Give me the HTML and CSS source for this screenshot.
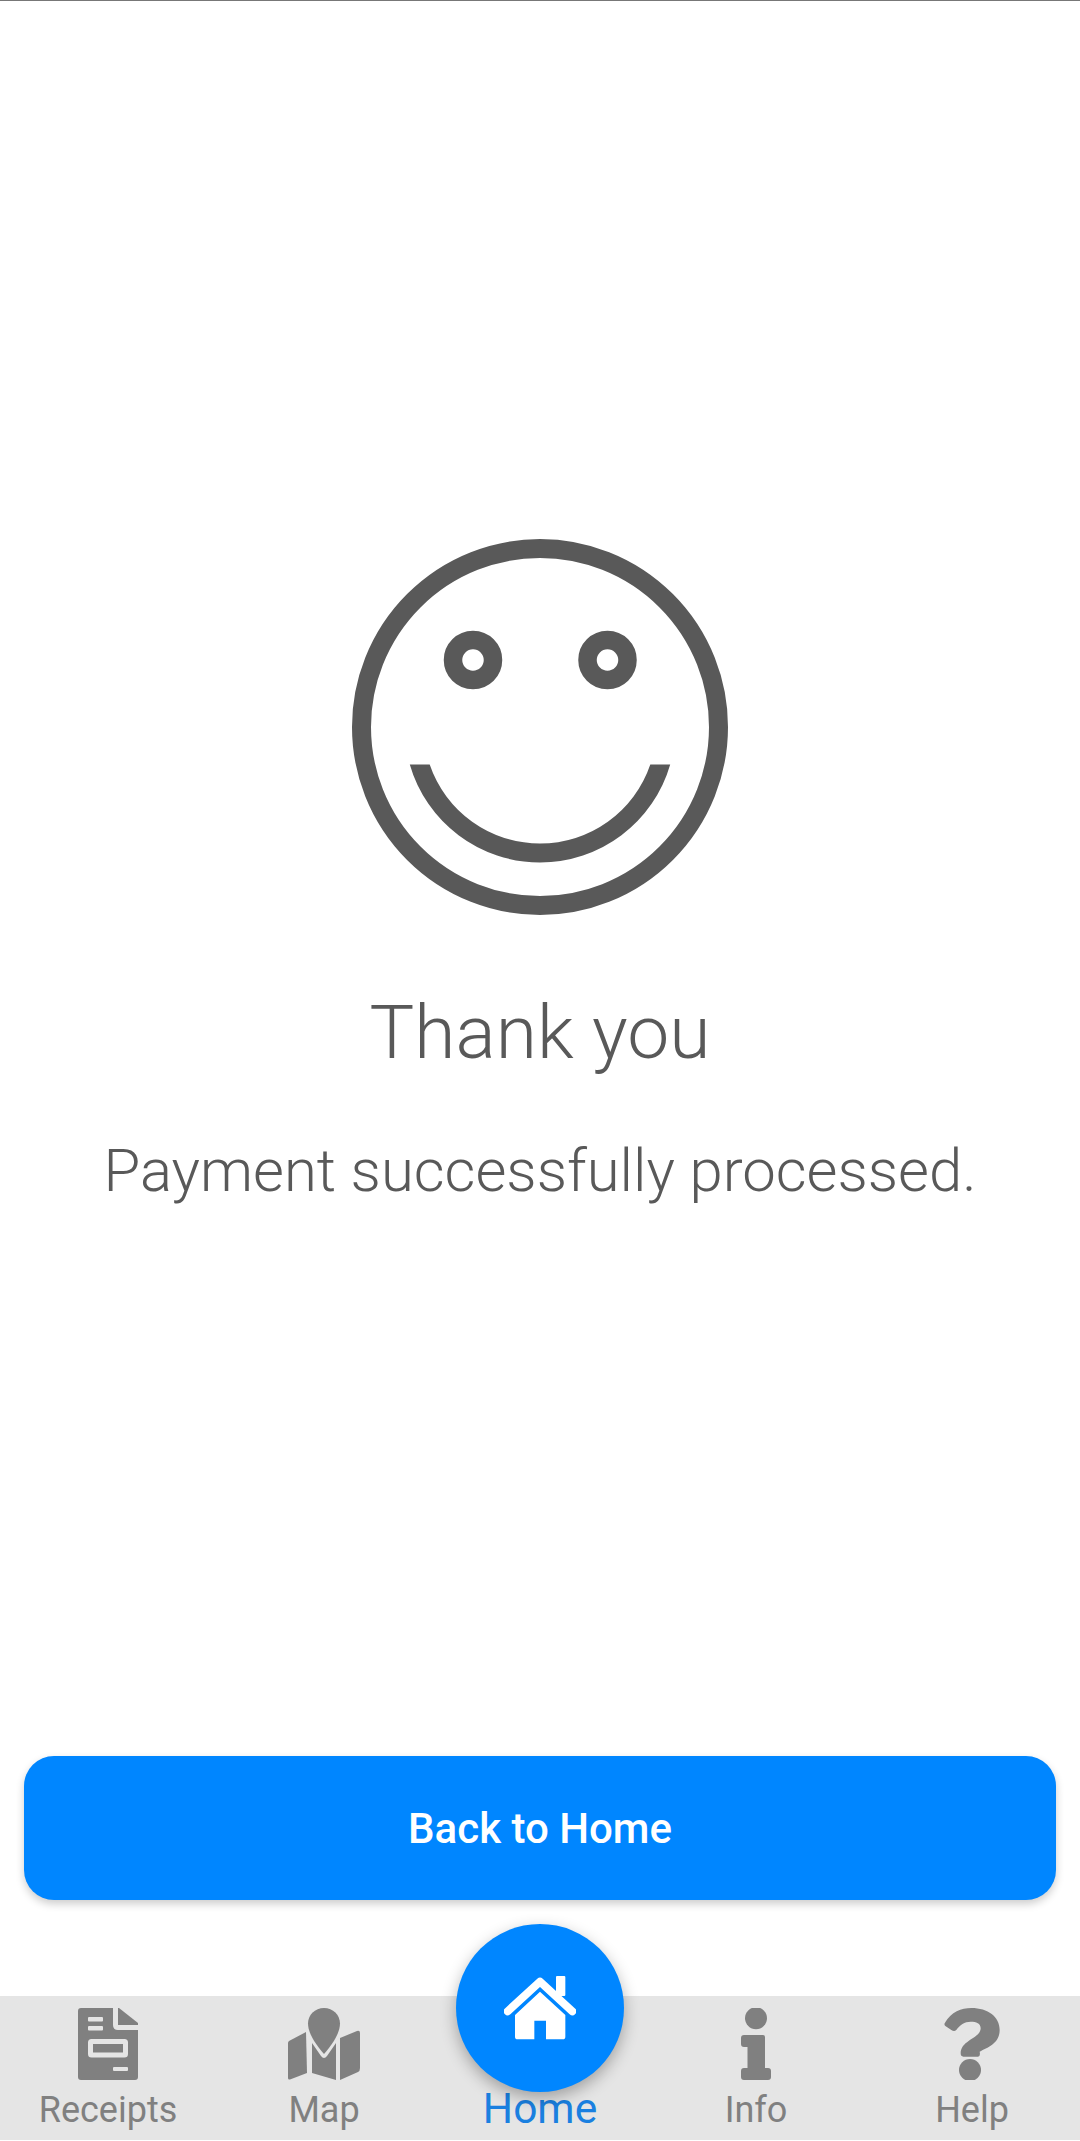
FILE: index.html
```html
<!DOCTYPE html>
<html lang="en">
<head>
    <meta charset="UTF-8">
    <meta name="viewport" content="width=device-width, initial-scale=1.0">
    <title>Payment Complete</title>
    <link rel="stylesheet" href="styles.css">
</head>
<body>
    <main class="content">
        <svg class="smiley" viewBox="350 537 380 380" aria-hidden="true">
            <circle cx="540" cy="727" r="178.5" fill="none" stroke="#595959" stroke-width="19"/>
            <circle cx="473" cy="660" r="20" fill="none" stroke="#595959" stroke-width="18.5"/>
            <circle cx="607.5" cy="660" r="20" fill="none" stroke="#595959" stroke-width="18.5"/>
            <path fill="#595959" d="M409.8 764.5A135.5 135.5 0 0 0 670.2 764.5H650.3A116.5 116.5 0 0 1 429.7 764.5Z"/>
        </svg>
        <h1 class="title">Thank you</h1>
        <p class="message">Payment successfully processed.</p>
    </main>

    <button class="home-button" type="button">Back to Home</button>

    <nav class="tabbar">
        <a class="tab">
            <svg class="tab-icon" width="60" height="72" viewBox="0 0 60 72" aria-hidden="true">
                <path fill="#808080" d="M3 0H35V17Q35 22 40 22H60V69Q60 72 57 72H3Q0 72 0 69V3Q0 0 3 0Z"/>
                <path fill="#808080" d="M40 0 L41 0 L60 15 V17 H40Z"/>
                <g fill="#e5e5e5">
                    <rect x="10" y="9" width="15" height="4.5" rx="1"/>
                    <rect x="10" y="18" width="15" height="4.5" rx="1"/>
                    <rect x="35" y="59" width="15" height="4" rx="1"/>
                </g>
                <rect x="12.5" y="33.5" width="35" height="13.5" fill="none" stroke="#e5e5e5" stroke-width="5" rx="1"/>
            </svg>
            <span class="tab-label">Receipts</span>
        </a>
        <a class="tab">
            <svg class="tab-icon" width="72" height="72" viewBox="0 0 72 72" aria-hidden="true">
                <path fill="#808080" d="M36 0C45 0 52 7 52 15.5C52 26 43 38 36 46C29 38 20 26 20 15.5C20 7 27 0 36 0Z"/>
                <path fill="#808080" d="M1 33L18 24L19 65L2 71.5Q0 72 0 70V35Q0 34 1 33Z"/>
                <path fill="#808080" d="M24 35L33 48Q36 52 39 48L48 35V72L24 65Z"/>
                <path fill="#808080" d="M52 30L69 23Q72 22 72 25V60Q72 63 70 64L52 72Z"/>
            </svg>
            <span class="tab-label">Map</span>
        </a>
        <a class="tab tab-home">
            <span class="home-fab">
                <svg width="72" height="64" viewBox="312 228 216 192" aria-hidden="true">
                    <rect x="468" y="228" width="28" height="60" rx="3" fill="#fff"/>
                    <path d="M323 334L420 245L517 334" fill="none" stroke="#fff" stroke-width="24" stroke-linecap="round" stroke-linejoin="round"/>
                    <path fill="#fff" d="M345 345L420 275L496 345V410Q496 418 488 418H438V362H403V418H353Q345 418 345 410Z"/>
                </svg>
            </span>
            <span class="tab-label">Home</span>
        </a>
        <a class="tab">
            <svg class="tab-icon" width="30" height="72" viewBox="0 0 30 72" aria-hidden="true">
                <circle cx="15" cy="10.2" r="11" fill="#808080"/>
                <path fill="#808080" d="M3 27H22Q24 27 24 29V60H27Q30 60 30 63V69Q30 72 27 72H3Q0 72 0 69V63Q0 60 3 60H6.5V39H3Q0 39 0 36V30Q0 27 3 27Z"/>
            </svg>
            <span class="tab-label">Info</span>
        </a>
        <a class="tab">
            <svg class="tab-icon" width="56" height="72" viewBox="798 144 168 216" aria-hidden="true">
                <circle cx="876" cy="330" r="33" fill="#808080"/>
                <path fill="#808080" d="M800 190C820 155 850 144 880 144C930 144 965 170 965 210C965 250 930 262 905 275Q908 290 900 290H856Q848 290 848 280C848 240 908 235 908 205C908 190 895 185 878 185C860 185 845 195 835 210C830 214 825 213 820 210L802 198Q798 195 800 190Z"/>
            </svg>
            <span class="tab-label">Help</span>
        </a>
    </nav>
</body>
</html>
```

FILE: styles.css
```css
body {
    font-family: Roboto, "Liberation Sans", sans-serif;
    background-color: white;
    display: flex;
    flex-direction: column;
    height: 2141px;
    margin: 0;
    border-top: 1px solid #777;
    box-sizing: border-box;
}

.content {
    flex: 1;
    display: flex;
    flex-direction: column;
    align-items: center;
    padding-top: 536px;
    color: #595959;
}

.smiley {
    width: 380px;
    height: 380px;
}

.title {
    font-size: 75px;
    font-weight: 300;
    line-height: 84px;
    margin: 73px 0 0;
}

.message {
    font-size: 59.8px;
    font-weight: 300;
    line-height: 70px;
    margin: 62px 0 0;
}

.home-button {
    margin: 0 24px 96px;
    height: 144px;
    background-color: #0086ff;
    color: white;
    border: none;
    border-radius: 30px;
    box-shadow: 0 4px 8px rgba(0, 0, 0, 0.2);
    font-family: inherit;
    font-size: 42px;
    font-weight: 500;
}

.tabbar {
    display: grid;
    grid-template-columns: repeat(5, 1fr);
    height: 144px;
    margin-bottom: 1px;
    background-color: #e5e5e5;
}

.tab {
    position: relative;
    display: flex;
    flex-direction: column;
    align-items: center;
    justify-content: flex-end;
    color: #808080;
}

.tab-icon {
    display: block;
    position: absolute;
    top: 12px;
}

.tab-label {
    font-size: 36px;
    line-height: 44px;
    margin-bottom: 8px;
}

.tab-home {
    color: #1a80e0;
}

.tab-home .tab-label {
    font-size: 42.5px;
    line-height: 48px;
    margin-bottom: 7px;
}

.home-fab {
    position: absolute;
    top: -72px;
    left: 24px;
    width: 168px;
    height: 168px;
    border-radius: 50%;
    background-color: #0086ff;
    box-shadow: 0 6px 16px rgba(0, 0, 0, 0.3);
    display: flex;
    align-items: center;
    justify-content: center;
}
```
